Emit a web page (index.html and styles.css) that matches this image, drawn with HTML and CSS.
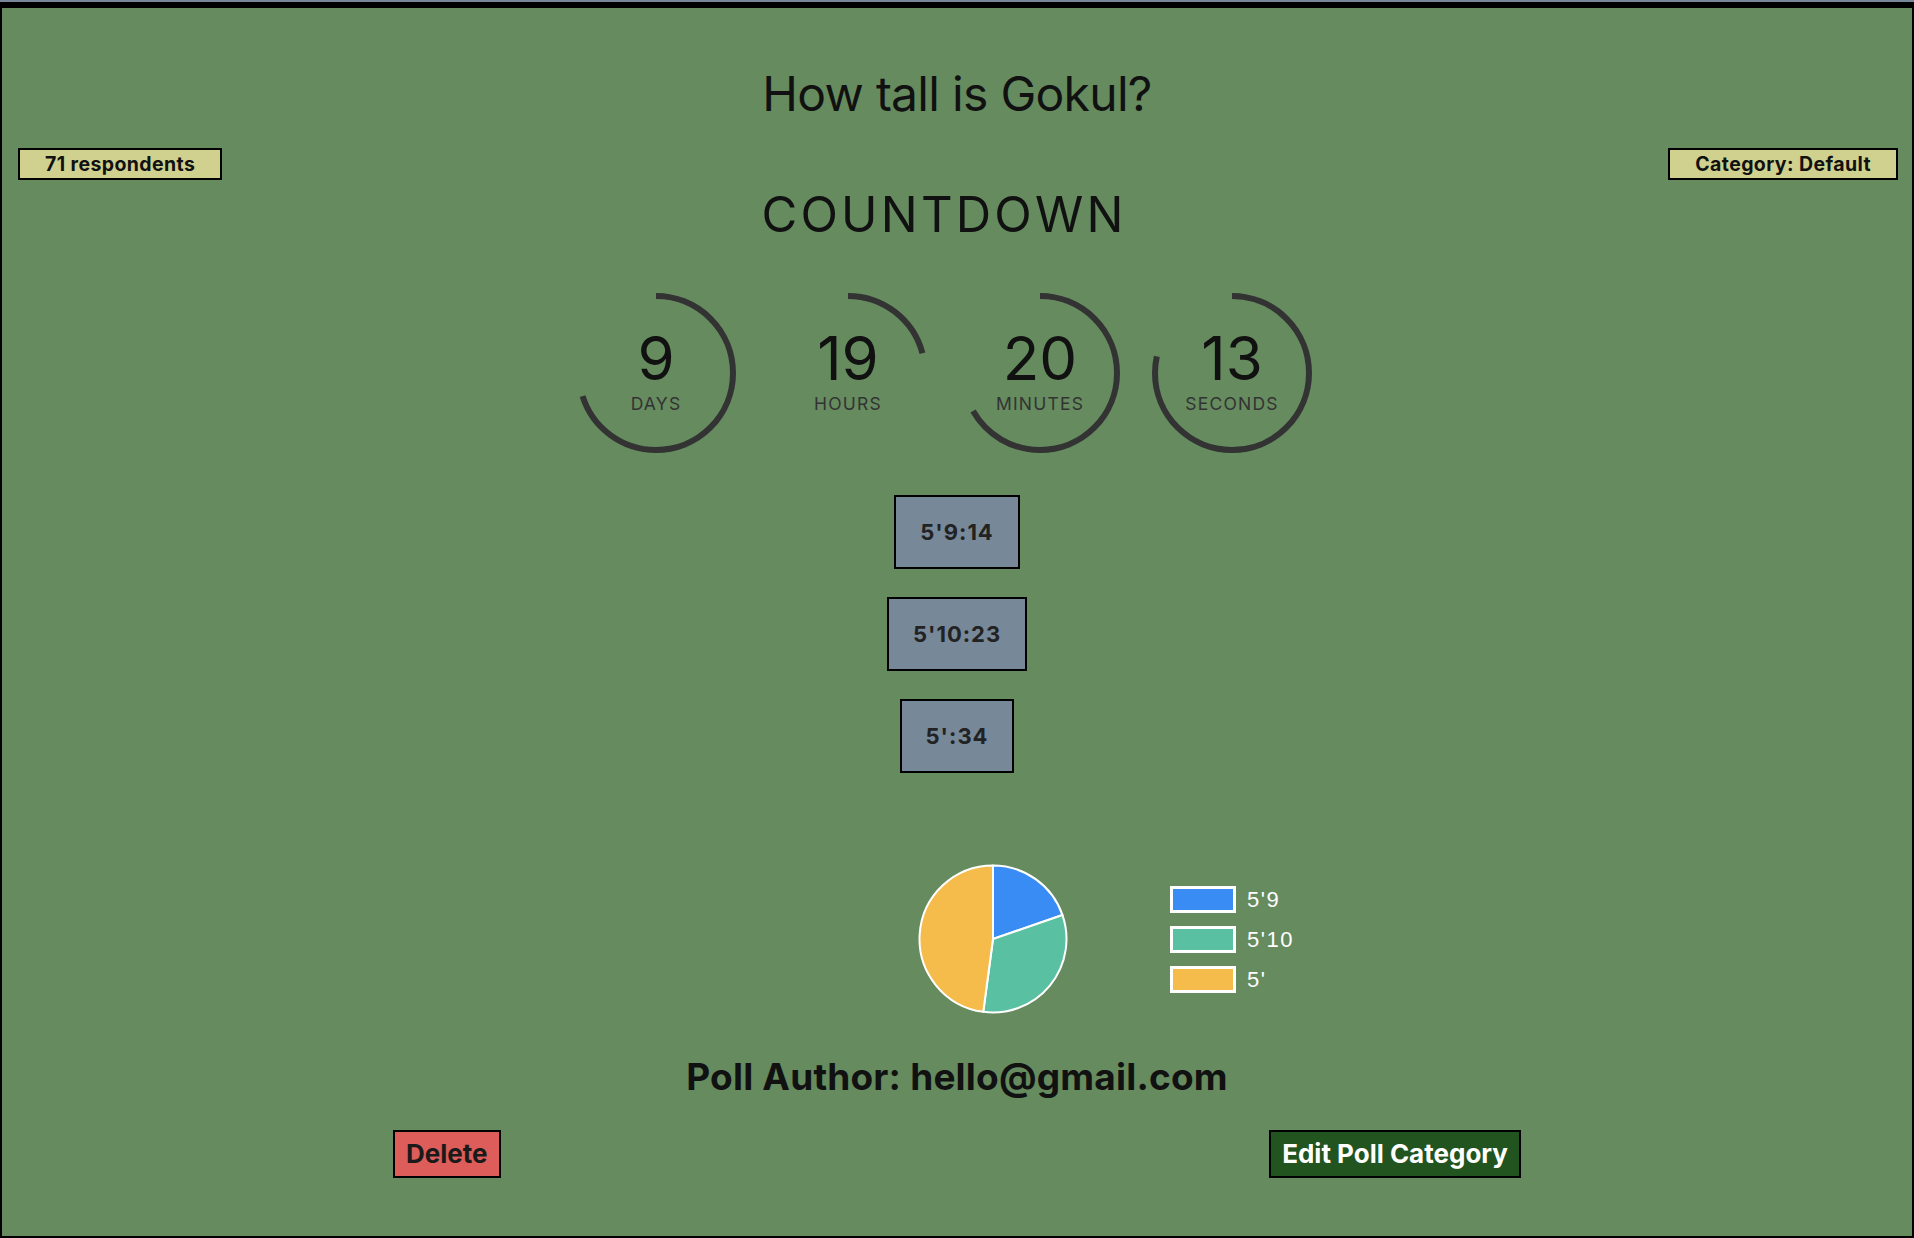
FILE: index.html
```html
<!DOCTYPE html>
<html lang="en">
<head>
<meta charset="utf-8">
<title>How tall is Gokul?</title>
<link rel="stylesheet" href="styles.css">
</head>
<body>
<div class="poll">
  <h1 class="poll-title">How tall is Gokul?</h1>
  <div class="meta-row">
    <span class="badge">71 respondents</span>
    <span class="badge">Category: Default</span>
  </div>

  <section class="countdown">
    <h2 class="countdown-title">COUNTDOWN</h2>
    <div class="units">
      <div class="unit">
        <svg class="ring" viewBox="0 0 160 160" width="160" height="160"><circle cx="80" cy="80" r="77" transform="rotate(-90 80 80)" stroke-dasharray="338.7 483.8"/></svg>
        <div class="unit-text"><span class="unit-num">9</span><span class="unit-label">DAYS</span></div>
      </div>
      <div class="unit">
        <svg class="ring" viewBox="0 0 160 160" width="160" height="160"><circle cx="80" cy="80" r="77" transform="rotate(-90 80 80)" stroke-dasharray="100.8 483.8"/></svg>
        <div class="unit-text"><span class="unit-num">19</span><span class="unit-label">HOURS</span></div>
      </div>
      <div class="unit">
        <svg class="ring" viewBox="0 0 160 160" width="160" height="160"><circle cx="80" cy="80" r="77" transform="rotate(-90 80 80)" stroke-dasharray="322.5 483.8"/></svg>
        <div class="unit-text"><span class="unit-num">20</span><span class="unit-label">MINUTES</span></div>
      </div>
      <div class="unit">
        <svg class="ring" viewBox="0 0 160 160" width="160" height="160"><circle cx="80" cy="80" r="77" transform="rotate(-90 80 80)" stroke-dasharray="379.0 483.8"/></svg>
        <div class="unit-text"><span class="unit-num">13</span><span class="unit-label">SECONDS</span></div>
      </div>
    </div>
  </section>

  <div class="answers">
    <button class="answer">5'9:14</button>
    <button class="answer">5'10:23</button>
    <button class="answer">5':34</button>
  </div>

  <div class="chart">
    <svg class="pie" viewBox="0 0 150 150" width="150" height="150">
      <path class="slice-blue" d="M75 75 L75 1.5 A73.5 73.5 0 0 1 144.49 51.06 Z"/>
      <path class="slice-teal" d="M75 75 L144.49 51.06 A73.5 73.5 0 0 1 65.27 147.85 Z"/>
      <path class="slice-yellow" d="M75 75 L65.27 147.85 A73.5 73.5 0 0 1 75 1.5 Z"/>
    </svg>
    <ul class="legend">
      <li class="legend-item"><span class="swatch swatch-blue"></span>5'9</li>
      <li class="legend-item"><span class="swatch swatch-teal"></span>5'10</li>
      <li class="legend-item"><span class="swatch swatch-yellow"></span>5'</li>
    </ul>
  </div>

  <h2 class="author">Poll Author: hello@gmail.com</h2>

  <div class="actions">
    <button class="btn btn-delete">Delete</button>
    <button class="btn btn-edit">Edit Poll Category</button>
  </div>
</div>
</body>
</html>
```

FILE: styles.css
```css
* {
  box-sizing: border-box;
}

html, body {
  margin: 0;
  padding: 0;
}

body {
  background: #778899;
  padding-top: 2px;
  font-family: "Inter", "Noto Sans", sans-serif;
  color: #111;
}

.poll {
  height: 1236px;
  background: #658b5f;
  border: 2px solid #000;
  border-top-width: 6px;
  display: flex;
  flex-direction: column;
}

.poll-title {
  margin: 57px 0 0;
  font-size: 48px;
  line-height: 58px;
  font-weight: 400;
  letter-spacing: -0.7px;
  text-align: center;
}

.meta-row {
  margin-top: 25px;
  display: flex;
  justify-content: space-between;
  padding: 0 14px 0 16px;
}

.badge {
  display: inline-block;
  height: 32px;
  padding: 0 25px;
  line-height: 28px;
  font-size: 19.5px;
  font-weight: 700;
  letter-spacing: 0.4px;
  background: #d0d18f;
  border: 2px solid #000;
  color: #111;
}

.countdown {
  padding-right: 26px;
}

.countdown-title {
  margin: 5px 0 0;
  font-size: 49px;
  line-height: 60px;
  font-weight: 400;
  letter-spacing: 3.2px;
  text-align: center;
}

.units {
  margin-top: 48px;
  display: flex;
  justify-content: center;
  gap: 32px;
}

.unit {
  width: 160px;
  height: 160px;
  display: grid;
  place-items: center;
}

.ring,
.unit-text {
  grid-area: 1 / 1;
}

.ring circle {
  fill: none;
  stroke: #333;
  stroke-width: 6;
}

.unit-text {
  display: flex;
  flex-direction: column;
  align-items: center;
  padding-bottom: 5px;
}

.unit-num {
  font-size: 60px;
  line-height: 60px;
  font-weight: 400;
  color: #111;
}

.unit-label {
  margin-top: 6px;
  font-size: 17.5px;
  line-height: 20px;
  letter-spacing: 1.2px;
  color: #333;
}

.answers {
  margin-top: 42px;
  display: flex;
  flex-direction: column;
  align-items: center;
  gap: 28px;
}

.answer {
  font-family: "Inter", "Noto Sans", sans-serif;
  font-size: 22px;
  line-height: 26px;
  font-weight: 700;
  letter-spacing: 1px;
  color: #222;
  background: #778899;
  border: 2px solid #000;
  padding: 22px 24px;
  border-radius: 0;
}

.chart {
  margin-top: 91px;
  display: flex;
  align-items: center;
  gap: 102px;
  padding-left: calc(50% - 39px);
}

.pie path {
  stroke: #fff;
  stroke-width: 2;
  stroke-linejoin: round;
}

.slice-blue { fill: #3a8cf5; }
.slice-teal { fill: #59c1a1; }
.slice-yellow { fill: #f5bc4c; }

.legend {
  list-style: none;
  margin: 0;
  padding: 0;
  display: flex;
  flex-direction: column;
  gap: 13px;
}

.legend-item {
  display: flex;
  align-items: center;
  gap: 11px;
  font-family: "Liberation Sans", Arial, sans-serif;
  font-size: 22px;
  line-height: 27px;
  letter-spacing: 1.5px;
  color: #fff;
}

.swatch {
  width: 66px;
  height: 27px;
  border: 3px solid #fff;
}

.swatch-blue { background: #3a8cf5; }
.swatch-teal { background: #59c1a1; }
.swatch-yellow { background: #f5bc4c; }

.author {
  margin: 41px 0 0;
  font-size: 37px;
  line-height: 44px;
  font-weight: 700;
  letter-spacing: 0.2px;
  text-align: center;
}

.actions {
  margin-top: 31px;
  display: flex;
  justify-content: space-between;
  padding: 0 391px;
}

.btn {
  font-family: "Inter", "Noto Sans", sans-serif;
  font-size: 26px;
  line-height: 32px;
  font-weight: 700;
  padding: 6px 11px;
  border: 2px solid #000;
  border-radius: 0;
}

.btn-delete {
  background: #dc5d59;
  color: #1a1a1a;
}

.btn-edit {
  background: #22541f;
  color: #fff;
}
```
